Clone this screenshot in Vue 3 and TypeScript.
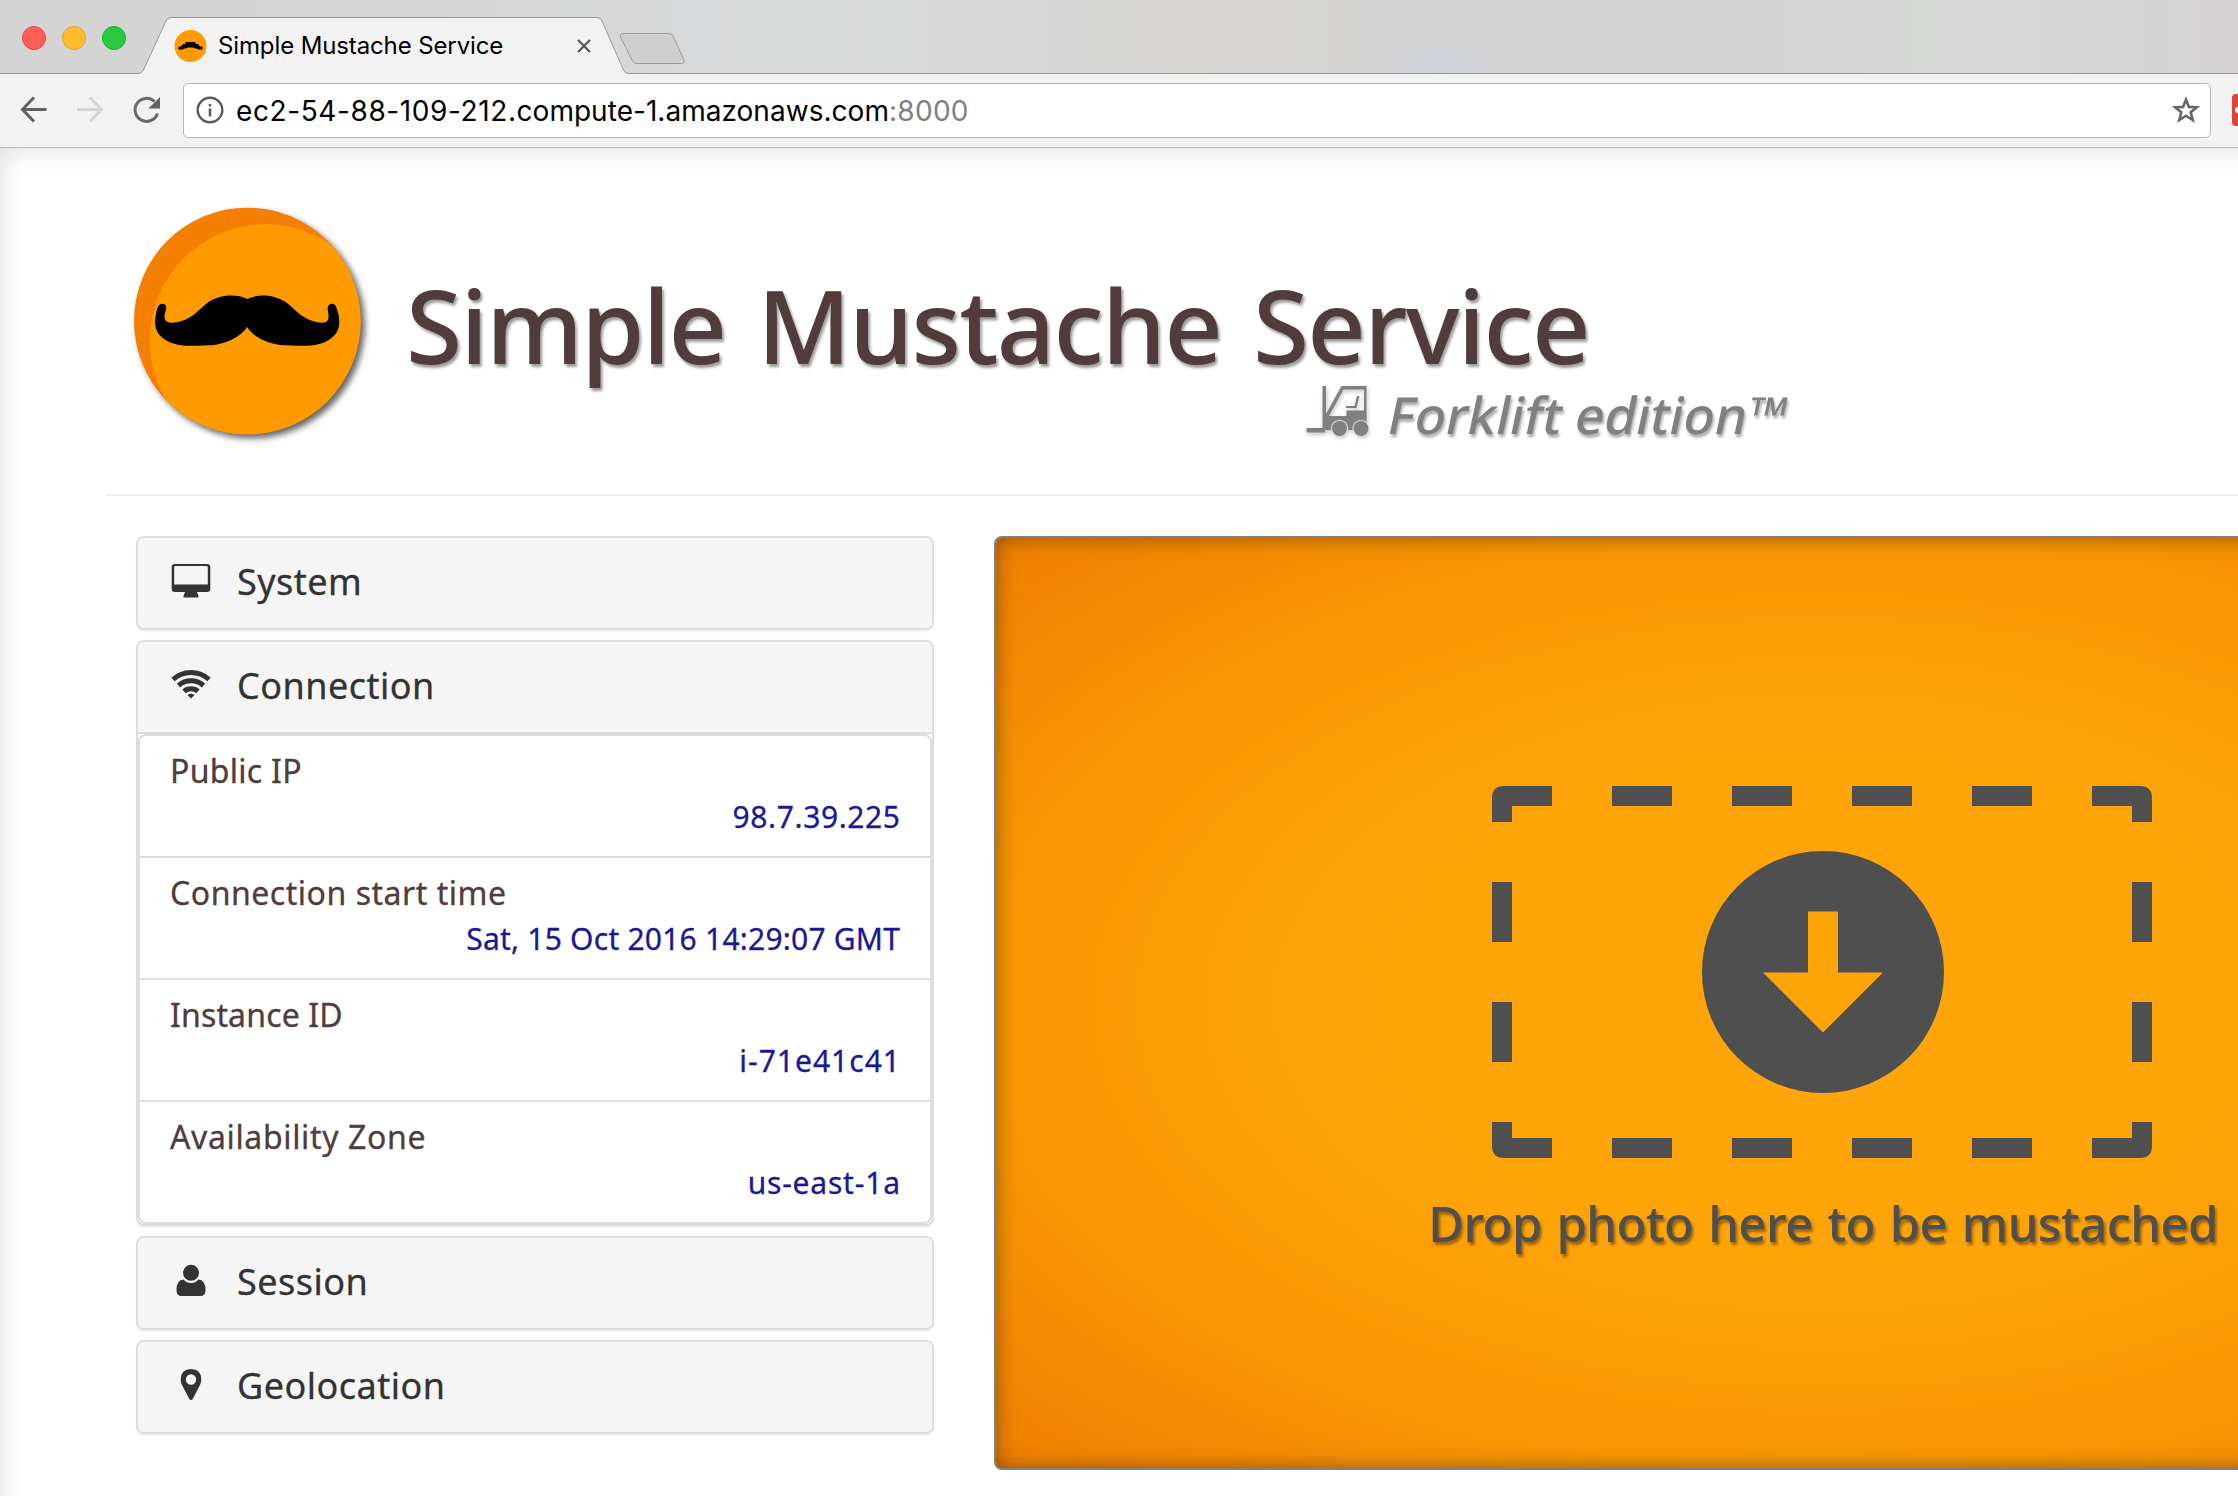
<script setup lang="ts">
interface Row { label: string; value: string; labelGap: number; valueGap: number }
interface Panel { id: 'system' | 'connection' | 'session' | 'geolocation'; title: string; rows: Row[] }

const panels: Panel[] = [
  { id: 'system', title: 'System', rows: [] },
  {
    id: 'connection',
    title: 'Connection',
    rows: [
      { label: 'Public IP', value: '98.7.39.225', labelGap: 0.3, valueGap: 0.6 },
      { label: 'Connection start time', value: 'Sat, 15 Oct 2016 14:29:07 GMT', labelGap: 0.53, valueGap: 0.22 },
      { label: 'Instance ID', value: 'i-71e41c41', labelGap: 0.15, valueGap: 1 },
      { label: 'Availability Zone', value: 'us-east-1a', labelGap: 0.64, valueGap: 0.8 },
    ],
  },
  { id: 'session', title: 'Session', rows: [] },
  { id: 'geolocation', title: 'Geolocation', rows: [] },
]
</script>

<template>
  <div class="window">
    <div class="tabstrip">
      <svg class="tabshape" width="700" height="74" viewBox="0 0 700 74">
        <path d="M0 73.5H138Q142 73.5 143.500 70L166 21Q167.500 17.500 171 17.500H597Q600.500 17.500 602 21L623.500 70Q625 73.500 629 73.500H700V75H0Z" fill="#f2f2f2" stroke="#96989a" />
        <path d="M624 33.500H669Q672 33.500 673 36L684 60Q685 63.500 681.500 63.500H637Q634 63.500 632.500 61L620.500 37Q619.500 33.500 624 33.500Z" fill="#cfcfcf" stroke="#9a9a9a" />
      </svg>
      <div class="lights"><i class="red"></i><i class="yellow"></i><i class="green"></i></div>
      <div class="tab">
        <svg class="favicon" width="33" height="32" viewBox="0 0 33 32">
          <circle cx="16.500" cy="16" r="16" fill="#ff9b00" />
          <path d="M4.500 16.500H7L9 14H11L12 12H21L22 14H24L26 16.500H28.500V19.500H24L23 18.500H21L19.500 17.500H13.500L12 18.500H10L9 19.500H4.500Z" fill="#000" />
        </svg>
        <span class="tabtitle">Simple Mustache Service</span>
        <svg class="close" width="14" height="14" viewBox="0 0 14 14"><path d="M1 1L13 13M13 1L1 13" stroke="#555" stroke-width="2.200" /></svg>
      </div>
    </div>

    <div class="toolbar">
      <svg class="nav" width="150" height="40" viewBox="16 90 150 40" fill="none" stroke-width="3">
        <path d="M46.500 109.500H23M34 97.500L22.500 109.500L34 121.500" stroke="#616161" />
        <path d="M77 109.500H101M90 97.500L101.500 109.500L90 121.500" stroke="#d4d4d4" />
        <path d="M154.500 101.500A11.500 11.500 0 1 0 157.500 113.500" stroke="#6a6a6a" />
        <path d="M160 97V108.500H148.500Z" fill="#616161" />
      </svg>
      <div class="omnibox">
        <svg width="28" height="28" viewBox="0 0 28 28">
          <circle cx="14" cy="14" r="12.300" fill="none" stroke="#5a5a5a" stroke-width="2.400" />
          <path d="M12.700 8H15.300V10.500H12.700ZM12.700 12.500H15.300V20.500H12.700Z" fill="#5a5a5a" />
        </svg>
        <span class="url"><span class="host">ec2-54-88-109-212.</span><span class="domain">compute-1.amazonaws.com</span><span class="port">:8000</span></span>
        <svg class="star" width="30" height="30" viewBox="0 0 30 30">
          <path d="M15 4.500L17.900 11.900L25.800 12.300L19.700 17.300L21.800 25L15 20.700L8.200 25L10.300 17.300L4.200 12.300L12.100 11.900Z" fill="none" stroke="#666" stroke-width="2.600" />
        </svg>
      </div>
      <div class="extension"><i></i></div>
    </div>

    <div class="page">
      <header class="head">
        <svg class="logo" width="240" height="245" viewBox="30 30 720 735">
          <defs><clipPath id="disc"><circle cx="382" cy="393" r="340" /></clipPath></defs>
          <circle cx="382" cy="393" r="340" fill="#f57f00" />
          <circle cx="437" cy="451" r="348" fill="#ff9b00" clip-path="url(#disc)" />
          <path d="M382 327C405 315 440 314 465 322C508 334 520 362 552 381C572 393 592 399 610 398C626 396 628 384 624 365C620 345 630 341 637 341C648 343 650 352 655 372C664 412 652 440 615 456C585 470 540 469 480 465C440 458 400 442 381 411C362 442 322 458 283 465C222 469 177 470 148 456C111 440 99 412 108 372C112 352 114 343 126 341C138 341 142 350 136 365C130 384 134 396 152 398C171 399 191 393 211 381C243 362 255 334 297 322C322 314 358 315 382 327Z" fill="#000" />
        </svg>
        <div class="titles">
          <h1>Simple Mustache Service</h1>
          <div class="edition">
            <svg class="forklift" width="64" height="52" viewBox="1306 386 64 52" fill="#808080">
              <mask id="cut" maskUnits="userSpaceOnUse" x="1306" y="386" width="64" height="52">
                <rect x="1306" y="386" width="64" height="52" fill="#fff" />
                <path d="M1343.500 390.500H1364V411.500H1346.500V417H1329Z" fill="#000" />
                <circle cx="1339.500" cy="429.500" r="8.800" fill="#000" /><circle cx="1361" cy="429.500" r="8.800" fill="#000" />
              </mask>
              <path mask="url(#cut)" d="M1306.500 429H1322.500V387H1326V415L1341.500 387H1366.500V423L1368 431H1325V433.500H1306.500Z" />
              <path d="M1357 397H1359.500L1356.500 409H1346V407H1354.500Z" />
              <circle cx="1339.500" cy="429.500" r="7.400" /><circle cx="1361" cy="429.500" r="7.400" />
            </svg>
            <span class="slant">Forklift edition™</span>
          </div>
        </div>
      </header>

      <main class="content">
        <div class="accordion">
          <section v-for="p in panels" :key="p.id" class="panel">
            <div class="heading" :class="{ open: p.rows.length }">
              <svg width="42" height="42" viewBox="0 0 42 42" fill="#333">
                <path v-if="p.id === 'system'" fill-rule="evenodd" d="M4 4H37Q40.300 4 40.300 7V29Q40.300 32 37 32H27L28.500 36V37.500H13.500V36L15 32H5Q1.700 32 1.700 29V7Q1.700 4 5 4ZM5.500 6Q4.200 6 4.200 7.300V24.500H37.800V7.300Q37.800 6 36.500 6Z" />
                <g v-else-if="p.id === 'connection'" fill="none" stroke="#333" stroke-width="5">
                  <path d="M3 15.500A27 27 0 0 1 39 15.500" />
                  <path d="M8.500 21.500A19 19 0 0 1 33.500 21.500" />
                  <path d="M14 27.300A10.500 10.500 0 0 1 28 27.300" />
                  <path d="M21 34.500L17.500 31Q21 28.400 24.500 31Z" fill="#333" stroke="none" />
                </g>
                <path v-else-if="p.id === 'session'" transform="translate(0 1.500)" d="M13.500 18Q16.500 21.500 21 21.500Q25.500 21.500 28.500 18Q35.500 18.500 35.500 28.500Q35.500 34.500 30.500 34.500H11.500Q6.500 34.500 6.500 28.500Q6.500 18.500 13.500 18ZM21 3.300A8 8 0 1 1 21 19.300A8 8 0 1 1 21 3.300Z" />
                <path v-else fill-rule="evenodd" transform="translate(0 2.500)" d="M21 2.500Q31.300 2.500 31.300 13Q31.300 16 30 18.500L23 32Q22.300 33.500 21 33.500Q19.700 33.500 19 32L12 18.500Q10.700 16 10.700 13Q10.700 2.500 21 2.500ZM21 7.800A5.200 5.200 0 1 0 21 18.200A5.200 5.200 0 1 0 21 7.800Z" />
              </svg>
              <span>{{ p.title }}</span>
            </div>
            <ul v-if="p.rows.length" class="list">
              <li v-for="r in p.rows" :key="r.label">
                <div class="label"><span :style="{ letterSpacing: r.labelGap + 'px' }">{{ r.label }}</span></div>
                <div class="value"><span :style="{ letterSpacing: r.valueGap + 'px', marginRight: -r.valueGap + 'px' }">{{ r.value }}</span></div>
              </li>
            </ul>
          </section>
        </div>

        <div class="dropzone">
          <svg width="660" height="372" viewBox="0 0 660 372" fill="#4f4f50">
            <path d="M12 0H60V20H20V36H0V12Q0 0 12 0ZM648 0H600V20H640V36H660V12Q660 0 648 0ZM12 372H60V352H20V336H0V360Q0 372 12 372ZM648 372H600V352H640V336H660V360Q660 372 648 372Z" />
            <template v-for="x in [120, 240, 360, 480]" :key="x">
              <rect :x="x" y="0" width="60" height="20" /><rect :x="x" y="352" width="60" height="20" />
            </template>
            <template v-for="y in [96, 216]" :key="y">
              <rect x="0" :y="y" width="20" height="60" /><rect x="640" :y="y" width="20" height="60" />
            </template>
            <path fill-rule="evenodd" d="M331 65A121 121 0 1 1 331 307A121 121 0 1 1 331 65ZM316 125.500V186.500H271L331 246.500L391 186.500H346V125.500Z" />
          </svg>
          <p>Drop photo here to be mustached</p>
        </div>
      </main>
    </div>
  </div>
</template>

<style>
body { margin: 0; overflow: hidden; background: #fff; }
</style>

<style scoped>
.window { width: 2238px; height: 1496px; overflow: hidden; background: #fff; font-family: "Noto Sans", "Open Sans", sans-serif; }
.window svg { display: block; flex: none; }

.tabstrip {
  position: relative; display: flex; align-items: center; height: 74px; box-sizing: border-box;
  background:
    radial-gradient(70px 40px at 1440px 74px, #ced2dc, transparent),
    linear-gradient(90deg, #d4d4d4 0, #d5d5d5 350px, #d8d9da 750px, #d8dad9 840px, #d6d6d6 1080px, #d8d6d3 1200px, #d4d4d4 1400px, #d3d3d3 1700px, #d6d8d6 1950px, #d5d5d5 2130px, #d7d3d4 2238px);
  border-bottom: 1px solid #96989a;
}
.tabshape { position: absolute; left: 0; top: 0; }
.lights { position: relative; top: 1.500px; display: flex; gap: 16px; margin-left: 22px; }
.lights i { width: 24px; height: 24px; border-radius: 50%; box-sizing: border-box; border: 1px solid; }
.lights .red { background: #ff5f57; border-color: #e2463f; }
.lights .yellow { background: #ffbd2e; border-color: #e1a025; }
.lights .green { background: #28ca42; border-color: #1dad2b; }
.tab { position: relative; display: flex; align-items: center; height: 56px; margin: 18px 0 0 48px; width: 418px; }
.tabtitle { margin-left: 11px; font: 400 24px/56px Inter, sans-serif; letter-spacing: -0.120px; color: #000; white-space: nowrap; }
.close { margin-left: auto; margin-right: 1px; }

.toolbar { display: flex; align-items: center; height: 74px; box-sizing: border-box; padding-bottom: 1px; background: #f2f2f2; border-bottom: 1px solid #b3b3b3; }
.nav { margin-left: 16px; }
.omnibox {
  display: flex; align-items: center; flex: none; width: 2028px; height: 55px; box-sizing: border-box; margin-left: 17px; padding: 0 9px 0 12px;
  background: #fff; border: 1px solid #b5b5b5; border-radius: 5px; white-space: nowrap;
  font: 400 28px/52px Inter, sans-serif;
}
.url { margin: 2px 0 0 12px; color: #000; }
.host { letter-spacing: 0.600px; }
.domain { letter-spacing: 0.030px; }
.port { color: #808080; letter-spacing: 0.300px; }
.star { margin-left: auto; }
.extension { display: flex; align-items: center; width: 32px; height: 32px; margin-left: 21px; flex: none; border-radius: 4px; background: #dc4437; }
.extension i { width: 26px; height: 6px; margin-left: 3px; border-radius: 3px; background: #fff; }

.page { width: 2300px; height: 1400px; box-sizing: border-box; box-shadow: inset 8px 8px 24px -6px rgba(0, 0, 0, .13); }
.head { display: flex; align-items: flex-start; height: 348px; box-sizing: border-box; margin-left: 106px; padding: 52px 0 0 24px; border-bottom: 2px solid #eee; }
.logo { overflow: visible; filter: drop-shadow(4px 4px 3px rgba(0, 0, 0, .6)); }
.titles { width: 1384px; margin: 65px 0 0 36px; }
h1 { margin: 0; font-size: 102px; line-height: 119px; font-weight: 500; letter-spacing: -1.680px; word-spacing: 7px; color: #503c3c; white-space: nowrap; text-shadow: 2px 3px 3px rgba(0, 0, 0, .4); }
.edition { display: flex; height: 60px; padding-left: 900px; color: #808080; font-size: 51px; line-height: 60px; font-weight: 500; text-shadow: 2px 3px 3px rgba(0, 0, 0, .35); white-space: nowrap; }
/* upright letterforms leaned over the baseline */
.slant { display: inline-block; transform: skewX(-12deg); transform-origin: 0 50px; letter-spacing: 0.070px; }
.forklift { margin: 1px 15px 0 0; filter: drop-shadow(1px 2px 2px rgba(0, 0, 0, .25)); }

.content { display: flex; gap: 60px; padding: 40px 0 0 136px; }
.accordion { width: 798px; flex: none; display: flex; flex-direction: column; gap: 10px; -webkit-text-stroke-width: .3px; }
.panel { border: 2px solid #ddd; border-radius: 8px; box-shadow: 0 2px 2px rgba(0, 0, 0, .05); background: #fff; }
.heading { display: flex; align-items: center; height: 90px; padding-left: 32px; border-radius: 6px; background: #f5f5f5; color: #333; font-size: 36px; line-height: 88px; letter-spacing: .480px; }
.heading.open { border-radius: 6px 6px 0 0; border-bottom: 2px solid #ddd; }
.heading span { margin: -2px 0 0 25px; }
.heading svg { margin-top: -4px; }
.list { margin: 0; padding: 0; list-style: none; border: 2px solid #ddd; border-radius: 8px; }
.list li { height: 120px; padding: 12px 30px 0; box-sizing: border-box; }
.list li + li { height: 122px; border-top: 2px solid #ddd; }
.label { font-size: 32px; line-height: 46px; color: #503c3c; }
.value { font-size: 30px; line-height: 45px; color: #1b1992; text-align: right; }

.dropzone {
  display: flex; flex-direction: column; align-items: center; width: 1658px; height: 934px; flex: none; box-sizing: border-box; padding-top: 248px;
  border: 2px solid #808080; border-radius: 8px;
  background: radial-gradient(ellipse farthest-corner, #ffa50a 0, #ffa50a 38%, #fa9604 70%, #ee7f00 100%);
  box-shadow: inset 0 0 20px rgba(0, 0, 0, .4);
}
.dropzone svg { margin-left: -2px; }
.dropzone p { margin: 33px 0 0; font-size: 49px; line-height: 64px; font-weight: 500; letter-spacing: -.550px; word-spacing: 2.500px; color: #4f4f50; text-shadow: 2px 3px 3px rgba(0, 0, 0, .4); white-space: nowrap; }
</style>
